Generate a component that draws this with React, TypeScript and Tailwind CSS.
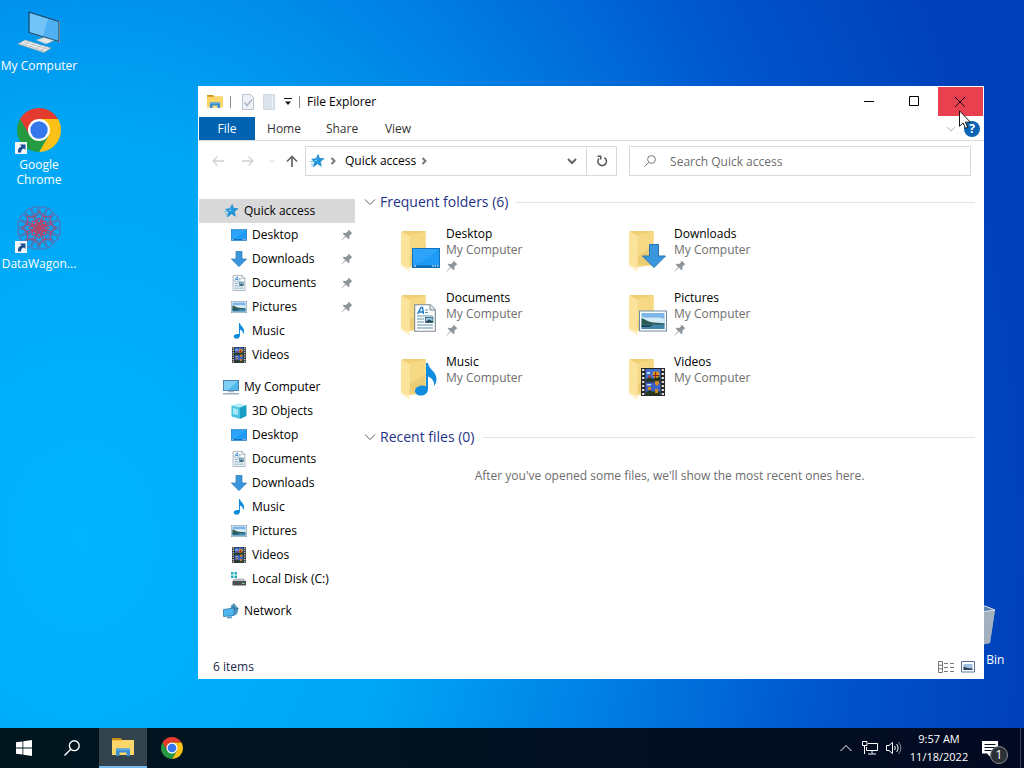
import { useState } from "react";
import type { ComponentType, ReactNode, SVGProps } from "react";

type IconProps = SVGProps<SVGSVGElement>;
type Icon = ComponentType<IconProps>;

/* ---------- Folder and file icons ---------- */

const StarIcon = (props: IconProps) => (
  <svg viewBox="0 0 16 16" {...props}>
    <path d="M9.200 1.500l1.300 4 4.500.1-3.600 2.900.9 4.700-3.700-2.500L4.500 13.800l1.100-4.600L2.800 6.200l4.200-.5z" fill="#2196dc" stroke="#1b84c9" strokeWidth=".7" />
    <path d="M1.500 8.500h3M2 10.800h2.500M2.500 12.900h2" stroke="#5bb8ea" strokeWidth=".9" />
    <path d="M9 3.500L7.800 6.700l-3 .3 3 1.500z" fill="#7fcdf8" />
  </svg>
);

const DesktopIcon = (props: IconProps) => (
  <svg viewBox="0 0 28 28" {...props}>
    <rect x=".5" y="4.500" width="27" height="19" fill="#1e9bf7" stroke="#1272bd" />
    <path d="M1 5h26L9 19H1z" fill="#38a8fb" opacity=".6" />
    <path d="M1 21.500h26V23H1z" fill="#0d66ae" />
    <path d="M2 22h2M20 22h1.500M22.500 22H24M25 22h1.500" stroke="#fff" strokeWidth="1.200" />
  </svg>
);

const DownloadIcon = (props: IconProps) => (
  <svg viewBox="0 0 24 24" {...props}>
    <path d="M7.500.5h9V12h7L12 23.500.5 12h7z" fill="#3a96dd" stroke="#2675b5" />
  </svg>
);

const DocumentIcon = (props: IconProps) => (
  <svg viewBox="0 0 22 28" {...props}>
    <path d="M.7.7h15.600l5 5v21.600H.7z" fill="#fff" stroke="#7b8791" strokeWidth="1.100" />
    <path d="M16 .7v5.300h5.300" fill="#e5eaee" stroke="#7b8791" />
    <path d="M3.500 10l3.500-6.500h1.500L9.500 10M5 8h4" fill="none" stroke="#1979ca" strokeWidth="1.400" />
    <path d="M11 6h3M11 8.500h3M3 12h16M3 15h7M3 18h7M3 21h16M3 24h16" stroke="#5a92ad" strokeWidth="1.100" />
    <rect x="11.500" y="13.500" width="7.500" height="5" fill="#8fc3de" stroke="#355f78" strokeWidth=".8" />
    <path d="M12 17.500l3-2 4 2v1h-7z" fill="#27475a" />
  </svg>
);

const PictureIcon = (props: IconProps) => (
  <svg viewBox="0 0 28 28" {...props}>
    <rect x=".5" y="4" width="27" height="20" fill="#fff" stroke="#6f8ca3" />
    <rect x="2.500" y="6" width="23" height="16" fill="#7db7ea" />
    <path d="M2.500 10c7 2 14-1 23 2v4h-23z" fill="#d6ebf8" />
    <path d="M2.500 11.500c3 0 5 2.500 9 3.500s9 .5 14 1.500v1.500h-23z" fill="#2c5d50" />
    <path d="M2.500 17.500h23V22h-23z" fill="#4285ad" />
    <path d="M2.500 18h12l-4 2h-8z" fill="#214c58" />
  </svg>
);

const MusicIcon = (props: IconProps) => (
  <svg viewBox="0 0 22 33" {...props}>
    <path
      d="M11 0h2c.4 6 8.500 8.500 8.500 16 0 3-1 5-2.500 7 .6-5-2-8-6-9.500V26c0 4-3 6.500-7 6.500-3.500 0-6-1.800-6-4.500 0-3.200 3.500-5.500 7.500-5.500 1.300 0 2.500.2 3.500.7z"
      fill="#0f8ce0"
    />
  </svg>
);

const VideoIcon = (props: IconProps) => (
  <svg viewBox="0 0 24 28" {...props}>
    <rect width="24" height="28" fill="#262626" />
    <path d="M2.200 1v27M21.800 1v27" stroke="#e8e8e8" strokeWidth="2.200" strokeDasharray="2 2" />
    <rect x="4.500" y="1" width="15" height="12.500" fill="#3f6fd1" />
    <rect x="4.500" y="14.500" width="15" height="12.500" fill="#3c63c4" />
    <path d="M5 11l4-2 3 2 3-3 4 1v4.500H5zM5 24l4-2 3 2 3-2 4 2v3H5z" fill="#26391f" />
    <path d="M12.500 3.500h5l1 3.500-2 3h-3l-2-3z" fill="#e39a1b" />
    <path d="M14 4h1.200v6H14zM12 7h6v1h-6z" fill="#8b2315" />
    <path d="M14 13h4v3l-2 2-2-2zM7 19h3v3H7zM14 21h3v4h-3z" fill="#d18a22" />
    <path d="M6 4h3v2H6zM6 16h4v1.500H6z" fill="#c7d8f7" />
    <path d="M7 8l2-1 1 2-2 1z" fill="#c4342a" />
  </svg>
);

const ComputerIcon = (props: IconProps) => (
  <svg viewBox="0 0 16 16" {...props}>
    <rect x=".5" y="1.500" width="15" height="10" fill="#4db8ec" stroke="#3d7ea8" strokeWidth=".9" />
    <path d="M1 2h14L5 11H1z" fill="#8cd6f7" opacity=".8" />
    <path d="M5 11.800h6v1.500H5z" fill="#a9b4bb" />
    <path d="M0 14.800h16" stroke="#7f919c" strokeWidth="1.100" />
  </svg>
);

const CubeIcon = (props: IconProps) => (
  <svg viewBox="0 0 16 16" {...props}>
    <path d="M.5 2.500L7 .5l8.500 1.500L9 4.500z" fill="#b5eef8" />
    <path d="M.5 2.500L9 4.500V16L.5 13.500z" fill="#4cc3e0" />
    <path d="M9 4.500L15.500 2v11L9 16z" fill="#1b9cc4" />
    <path d="M2 5l5 1.300v6L2 11z" fill="#a5e9f6" />
  </svg>
);

const DiskIcon = (props: IconProps) => (
  <svg viewBox="0 0 16 16" {...props}>
    <path d="M0 1h2.500v2.500H0zM3.500 1H6v2.500H3.500zM0 4.500h2.500V7H0zM3.500 4.500H6V7H3.500z" fill="#22b0b8" />
    <path d="M3 7.500h10l2 2.500H1.500z" fill="#b9bdc0" />
    <path d="M1.500 10H15v4.500H1.500z" fill="#4b5054" />
    <path d="M11 12.500h2.500" stroke="#7ce08a" />
  </svg>
);

const NetworkIcon = (props: IconProps) => (
  <svg viewBox="0 0 16 16" {...props}>
    <path d="M8 2.500L11 .5l4.500 5-1.500 6-4 1z" fill="#5a9cc6" />
    <path d="M11 .5v12M7 5l8.500.5M8 2.500l7 6" stroke="#2c6f9c" strokeWidth=".7" fill="none" />
    <path d="M.5 6.500L11 5v7.500l-10.500 1z" fill="#4eb6ee" stroke="#2d79a8" strokeWidth=".8" />
    <path d="M4 13.700l4.500-.5.500 2H4z" fill="#4b93bf" />
  </svg>
);

const PinIcon = (props: IconProps) => (
  <svg viewBox="0 0 12 12" {...props}>
    <path d="M7.500 0.500l4 4-1.200.3-2 2.200.1 2.500-1 .7-2.600-2.600L.8 11.500l-.3-.3 3.600-4.100L1.800 4.700l.7-1 2.600.2L7.200 1.900z" fill="#8f969b" />
  </svg>
);

const ExplorerIcon = (props: IconProps) => (
  <svg viewBox="0 0 22 18" {...props}>
    <path d="M0 0h8l2 2h12v15H0z" fill="#f5c242" />
    <path d="M0 0h8l2 2H0z" fill="#c98f1b" />
    <path d="M0 3h9l2-1h11v15H0z" fill="#fbd66b" />
    <path d="M4 18v-7.500h14V18h-3.500v-3.500h-7V18z" fill="#3b8bd0" />
    <path d="M4 10.500h14v2H4z" fill="#5aa9e6" />
  </svg>
);

const ChromeIcon = (props: IconProps) => (
  <svg viewBox="0 0 44 44" {...props}>
    <path d="M22 11h19.050A22 22 0 0 0 2.950 11l9.520 16.500z" fill="#e33b2e" />
    <path d="M22 11h19.050A22 22 0 0 1 22 44l9.530-16.500z" fill="#fbc116" />
    <path d="M12.470 27.500L2.950 11A22 22 0 0 0 22 44l9.530-16.500z" fill="#249a41" />
    <circle cx="22" cy="22" r="11" fill="#fff" />
    <circle cx="22" cy="22" r="8.700" fill="#3577ec" />
  </svg>
);

const FolderIcon = ({ children, ...props }: IconProps & { children: ReactNode }) => (
  <svg viewBox="0 0 44 48" {...props}>
    <path d="M2 5h23.500v34L9 41z" fill="#f0cf74" />
    <path d="M9 9l16.500-3v33L9 41z" fill="#f5d985" />
    <path d="M10 39h15.500V20L10 30z" fill="#e6c36a" opacity=".6" />
    <path d="M1 5.500l8.500 4.500v35L7 44 1 39z" fill="#fbe39c" />
    <path d="M1 39l6 5 2.500 1.500V42z" fill="#fff3cf" />
    {children}
  </svg>
);

/* ---------- Desktop icons ---------- */

const ShortcutBadge = () => (
  <g>
    <rect x="0" y="35" width="12" height="12" fill="#f2f5f8" />
    <path d="M3 45.500c-.5-3.500 1-5.500 3.500-6L5 37.500h5.500V43L9 41.500c-2 .5-3 1.500-3 4z" fill="#1f4f91" />
  </g>
);

const BigComputer = () => (
  <svg viewBox="0 0 48 48" className="h-12 w-12">
    <path d="M14 4l31 9.500v21L14 25z" fill="#c6d4dc" />
    <path d="M14 4l30 9.500v20L14 24.500z" fill="#4fb0f2" stroke="#173b57" strokeWidth="1" />
    <path d="M15 5.500l18 5.500-5 17-13-4z" fill="#7ac8f9" opacity=".8" />
    <path d="M27 30l8 2v3l-7-1z" fill="#c1cbd1" />
    <path d="M21 32l8-2.500 10 3L31 36z" fill="#e1e6e9" stroke="#93a4ae" strokeWidth=".5" />
    <path d="M3 36l7-4 26 8-7 4.500z" fill="#f1f1ef" stroke="#93a4ae" strokeWidth=".7" />
    <path d="M6 35.500l25 8M9 34l25 7.500M8 37.500l6-4M14 39.500l6-4M20 41.500l6-4M25 43l6-4" stroke="#a9b2b6" strokeWidth=".7" />
  </svg>
);

const BigChrome = () => (
  <svg viewBox="0 0 48 48" className="h-12 w-12">
    <ChromeIcon x="2" y="1" width="44" height="44" />
    <ShortcutBadge />
  </svg>
);

const BigDataWagon = () => (
  <svg viewBox="0 0 48 48" className="h-12 w-12">
    <g fill="none" stroke="#5c6fae" strokeWidth="1.100">
      {[0, 45, 90, 135, 180, 225, 270, 315].map((angle) => (
        <g key={angle} transform={`rotate(${angle} 24 22)`}>
          <path d="M17 1h6v8h-6zM25 1h6v8h-6z" />
          <path d="M24 5l6 7-6 7-6-7z" stroke="#a04c74" />
          <path d="M24 12l4 6-4 3-4-3z" stroke="#c2405c" />
        </g>
      ))}
    </g>
    <ShortcutBadge />
  </svg>
);

const RecycleBin = () => (
  <svg viewBox="0 0 48 48" className="h-12 w-12">
    <path d="M8 8l28-4 10 4-5 33-23 5-6-5z" fill="#8499ad" />
    <path d="M8 8l10 4 28-4-5 33-23 5z" fill="#a2b1bd" />
    <path d="M8 8l28-4 10 4-28 4z" fill="#5b7fae" stroke="#dbe4ec" />
  </svg>
);

interface DesktopItemProps {
  label: string;
  icon: Icon;
}

const shortcuts: DesktopItemProps[] = [
  { label: "My Computer", icon: BigComputer },
  { label: "Google Chrome", icon: BigChrome },
  { label: "DataWagon...", icon: BigDataWagon },
];

const DesktopItem = ({ label, icon: ItemIcon }: DesktopItemProps) => (
  <button className="flex h-[99px] w-[78px] flex-col items-center gap-0.5 pt-2 text-xs leading-[15px] text-white">
    <ItemIcon />
    <span className="w-full text-center">{label}</span>
  </button>
);

/* ---------- Explorer data ---------- */

interface NavItem {
  label: string;
  icon: Icon;
  pinned?: boolean;
}

const navGroups: { root: NavItem; items: NavItem[] }[] = [
  {
    root: { label: "Quick access", icon: StarIcon },
    items: [
      { label: "Desktop", icon: DesktopIcon, pinned: true },
      { label: "Downloads", icon: DownloadIcon, pinned: true },
      { label: "Documents", icon: DocumentIcon, pinned: true },
      { label: "Pictures", icon: PictureIcon, pinned: true },
      { label: "Music", icon: MusicIcon },
      { label: "Videos", icon: VideoIcon },
    ],
  },
  {
    root: { label: "My Computer", icon: ComputerIcon },
    items: [
      { label: "3D Objects", icon: CubeIcon },
      { label: "Desktop", icon: DesktopIcon },
      { label: "Documents", icon: DocumentIcon },
      { label: "Downloads", icon: DownloadIcon },
      { label: "Music", icon: MusicIcon },
      { label: "Pictures", icon: PictureIcon },
      { label: "Videos", icon: VideoIcon },
      { label: "Local Disk (C:)", icon: DiskIcon },
    ],
  },
  { root: { label: "Network", icon: NetworkIcon }, items: [] },
];

const folders = [
  { name: "Desktop", pinned: true, overlay: <DesktopIcon x="12" y="18" width="28" height="28" /> },
  { name: "Downloads", pinned: true, overlay: <DownloadIcon x="14" y="18" width="24" height="24" /> },
  { name: "Documents", pinned: true, overlay: <DocumentIcon x="14" y="14" width="22" height="28" /> },
  { name: "Pictures", pinned: true, overlay: <PictureIcon x="11" y="17" width="28" height="28" /> },
  { name: "Music", pinned: false, overlay: <MusicIcon x="15" y="9" width="22" height="33" /> },
  { name: "Videos", pinned: false, overlay: <VideoIcon x="13" y="14" width="24" height="28" /> },
];

const Chevron = ({ className, d }: { className: string; d: string }) => (
  <svg viewBox="0 0 12 12" fill="none" stroke="currentColor" className={className}>
    <path d={d} />
  </svg>
);

const DOWN = "M1 3.500l5 5 5-5";
const RIGHT = "M4.500 3l3 3-3 3";

const SectionHeader = ({ title }: { title: string }) => (
  <div className="flex h-6 items-center px-[9px]">
    <button className="flex items-center gap-1 text-sm text-[#1e3287]">
      <Chevron d={DOWN} className="h-3 w-3 text-[#5c5c5c]" />
      {title}
    </button>
    <div className="ml-2 h-px flex-1 bg-[#e2e2e2]" />
  </div>
);

/* ---------- Explorer window ---------- */

const TitleBar = () => (
  <div className="flex h-[31px] items-start">
    <div className="flex h-full flex-1 items-center pl-[9px]">
      <ExplorerIcon className="h-[13px] w-4" />
      <div className="ml-[7px] h-3 w-px bg-[#8b8b8b]" />
      <button aria-label="Properties" className="ml-[11px]">
        <svg viewBox="0 0 12 16" className="h-4 w-3">
          <path d="M.5.5h8l3 3v12H.5z" fill="#eef2f7" stroke="#b9c4d3" />
          <path d="M2.500 8.500l2.500 3 5-6" fill="none" stroke="#a9b6ca" strokeWidth="1.500" />
        </svg>
      </button>
      <button aria-label="New folder" className="ml-[9px]">
        <svg viewBox="0 0 12 16" className="h-4 w-3">
          <path d="M.5.5h11v15H.5z" fill="#dbe2ea" stroke="#d0d9e3" />
          <path d="M9.500 1v14" stroke="#eef2f6" />
        </svg>
      </button>
      <button aria-label="Customize toolbar" className="ml-[9px]">
        <svg viewBox="0 0 8 8" className="h-2 w-2">
          <path d="M0 .5h8" stroke="#111" />
          <path d="M1 3.500h6l-3 3.500z" fill="#111" />
        </svg>
      </button>
      <div className="ml-[7px] h-3 w-px bg-[#8b8b8b]" />
      <h1 className="ml-[7px] text-xs text-black">File Explorer</h1>
    </div>
    <button aria-label="Minimize" className="flex h-[30px] w-[42px] items-center justify-center">
      <svg viewBox="0 0 10 10" className="h-2.5 w-2.5">
        <path d="M0 5.500h10" stroke="#000" />
      </svg>
    </button>
    <button aria-label="Maximize" className="flex h-[30px] w-12 items-center justify-center">
      <svg viewBox="0 0 10 10" className="h-2.5 w-2.5">
        <path d="M.5.5h9v9h-9z" stroke="#000" fill="none" />
      </svg>
    </button>
    <button aria-label="Close" className="mr-px mt-px flex h-[29px] w-[45px] items-center justify-center bg-[#e9404f] pr-px">
      <svg viewBox="0 0 10 10" className="h-2.5 w-2.5">
        <path d="M0 0l10 10M10 0L0 10" stroke="#231015" />
      </svg>
    </button>
  </div>
);

const Ribbon = () => (
  <div className="flex h-6 items-stretch border-b border-[#dadbdc] text-xs text-[#333]">
    <button className="ml-px w-14 bg-[#0063b1] text-white">File</button>
    <button className="w-[58px]">Home</button>
    <button className="w-[58px]">Share</button>
    <button className="w-[54px]">View</button>
    <div className="ml-auto flex items-center gap-2 pr-1">
      <button aria-label="Expand ribbon">
        <Chevron d={DOWN} className="h-2.5 w-2.5 text-[#a5a5a5]" />
      </button>
      <button aria-label="Help" className="h-4 w-4 rounded-full bg-[#0c64b4] text-xs font-bold leading-4 text-white">
        ?
      </button>
    </div>
  </div>
);

const AddressBar = () => (
  <div className="flex h-[42px] items-start pr-[13px] pt-[5px] text-xs">
    <div className="flex h-[30px] w-[107px] items-center pl-[14px]">
      <button aria-label="Back">
        <svg viewBox="0 0 12 12" fill="none" stroke="#d0d0d0" strokeWidth="1.300" className="h-3 w-3">
          <path d="M12 6H1M5.500 1.500L1 6l4.500 4.500" />
        </svg>
      </button>
      <button aria-label="Forward" className="ml-[18px]">
        <svg viewBox="0 0 12 12" fill="none" stroke="#d0d0d0" strokeWidth="1.300" className="h-3 w-3">
          <path d="M0 6h11M6.500 1.500L11 6l-4.500 4.500" />
        </svg>
      </button>
      <button aria-label="Recent locations" className="ml-3.5">
        <Chevron d="M3 5l3 2.500L9 5" className="h-2 w-2 text-[#b5b5b5]" />
      </button>
      <button aria-label="Up" className="ml-2.5">
        <svg viewBox="0 0 12 12" fill="none" stroke="#666" strokeWidth="1.700" className="h-3 w-3">
          <path d="M6 12V1.500M1 6.500l5-5 5 5" />
        </svg>
      </button>
    </div>
    <div className="flex h-[30px] min-w-0 flex-[312] items-center border border-[#d9d9d9]">
      <StarIcon className="ml-[3px] h-4 w-4" />
      <Chevron d={RIGHT} className="ml-0.5 h-3 w-3 stroke-2 text-[#777]" />
      <button className="ml-1.5 text-black">Quick access</button>
      <Chevron d={RIGHT} className="ml-0.5 h-3 w-3 stroke-2 text-[#777]" />
      <button aria-label="Previous locations" className="ml-auto px-2">
        <Chevron d="M2 4l4 4 4-4" className="h-3 w-3 stroke-2 text-[#666]" />
      </button>
      <button aria-label="Refresh" className="flex h-full w-[30px] items-center justify-center border-l border-[#d9d9d9]">
        <svg viewBox="0 0 12 12" fill="none" stroke="#555" strokeWidth="1.500" className="h-3 w-3">
          <path d="M8.300 2.600A4.300 4.300 0 1 1 3 3.400" />
          <path d="M1.500 1.300h3.200v3.200" />
        </svg>
      </button>
    </div>
    <div className="ml-3 flex h-[30px] min-w-0 flex-[342] items-center border border-[#d9d9d9]">
      <svg viewBox="0 0 12 12" fill="none" stroke="#777" className="ml-[14px] h-3 w-3 shrink-0">
        <circle cx="7.500" cy="4.500" r="3.900" />
        <path d="M4.800 7.300L.5 11.500" />
      </svg>
      <input
        type="search"
        aria-label="Search Quick access"
        placeholder="Search Quick access"
        className="ml-3.5 h-full min-w-0 flex-1 bg-transparent outline-none placeholder:text-[#6d6d6d]"
      />
    </div>
  </div>
);

const Sidebar = () => {
  const [selected, setSelected] = useState("0-root");

  return (
    <nav className="w-[157px] shrink-0 pl-px pt-4 text-xs text-black">
      {navGroups.map((group, index) => {
        const rootId = `${index}-root`;
        const RootIcon = group.root.icon;
        return (
          <ul key={rootId} className="mb-2">
            <li>
              <button
                onClick={() => setSelected(rootId)}
                className={`flex h-6 w-full items-center gap-[5px] pl-6 ${selected === rootId ? "bg-[#d9d9d9]" : ""}`}
              >
                <RootIcon className="h-4 w-4" />
                {group.root.label}
              </button>
            </li>
            {group.items.map((item) => {
              const id = `${index}-${item.label}`;
              return (
                <li key={id}>
                  <button
                    onClick={() => setSelected(id)}
                    className={`flex h-6 w-full items-center gap-[5px] pl-8 ${selected === id ? "bg-[#d9d9d9]" : ""}`}
                  >
                    <item.icon className="h-4 w-4" />
                    {item.label}
                    {item.pinned && <PinIcon className="ml-auto mr-0.5 h-3 w-3" />}
                  </button>
                </li>
              );
            })}
          </ul>
        );
      })}
    </nav>
  );
};

const ExplorerWindow = () => (
  <section className="absolute bottom-[49px] left-[198px] right-10 top-[86px] flex flex-col overflow-hidden bg-white">
    <TitleBar />
    <Ribbon />
    <AddressBar />
    <div className="flex min-h-0 flex-1">
      <Sidebar />
      <main className="min-w-0 flex-1 pt-[7px]">
        <SectionHeader title="Frequent folders (6)" />
        <div className="mt-3 grid grid-cols-[repeat(auto-fill,228px)] pl-[45px] pr-2">
          {folders.map((folder) => (
            <button key={folder.name} className="flex h-16 items-start gap-0.5 text-left text-xs leading-4">
              <FolderIcon className="h-12 w-11">{folder.overlay}</FolderIcon>
              <span className="flex flex-col">
                <span className="text-black">{folder.name}</span>
                <span className="text-[#6d6d6d]">My Computer</span>
                {folder.pinned && <PinIcon className="mt-0.5 h-3 w-3" />}
              </span>
            </button>
          ))}
        </div>
        <div className="mt-[7px]">
          <SectionHeader title="Recent files (0)" />
        </div>
        <p className="mt-[19px] text-center text-xs leading-4 text-[#6d6d6d]">
          After you've opened some files, we'll show the most recent ones here.
        </p>
      </main>
    </div>
    <footer className="flex h-6 items-center pl-[15px] pr-[9px] text-xs text-[#1e2a4a]">
      <span>6 items</span>
      <button aria-label="Details view" className="ml-auto">
        <svg viewBox="0 0 16 12" className="h-3 w-4" fill="none" stroke="#777">
          <path d="M.5.5h4v11h-4zM.5 4.200h4M.5 7.800h4" />
          <path d="M6 2.500h4M12 2.500h4M6 6.500h4M12 6.500h4M6 10.500h4M12 10.500h4" />
        </svg>
      </button>
      <button aria-label="Large icons view" className="ml-[7px]">
        <svg viewBox="0 0 14 12" className="h-3 w-3.5">
          <path d="M.5.5h13v10.500H.5z" fill="#fff" stroke="#5b7396" />
          <path d="M2.500 3h9v6h-9z" fill="#9cc1e2" />
          <path d="M2.500 5.500l4 1.500 5 .5V9h-9z" fill="#26425c" />
        </svg>
      </button>
    </footer>
  </section>
);

/* ---------- Taskbar ---------- */

const Taskbar = () => (
  <footer className="flex h-10 items-stretch bg-linear-to-r from-[#00161f] to-[#020a22] text-xs text-white">
    <button aria-label="Start" className="flex w-12 items-center justify-center">
      <svg viewBox="0 0 16 16" className="h-4 w-4" fill="#fff">
        <path d="M0 2.300l6.500-.9v6.200H0zM7.300 1.300L16 0v7.600H7.300zM0 8.400h6.500v6.200L0 13.700zM7.300 8.400H16V16l-8.700-1.300z" />
      </svg>
    </button>
    <button aria-label="Search" className="flex w-12 items-center justify-center">
      <svg viewBox="0 0 16 16" className="h-4 w-4" fill="none" stroke="#fff" strokeWidth="1.400">
        <circle cx="10.300" cy="5.700" r="4.900" />
        <path d="M6.800 9.200L.5 15.500" />
      </svg>
    </button>
    <button
      aria-label="File Explorer"
      className="ml-[3px] flex w-12 items-center justify-center border-b-2 border-[#76b9ed] bg-[#33444f]"
    >
      <ExplorerIcon className="h-[18px] w-[22px]" />
    </button>
    <button aria-label="Google Chrome" className="ml-px flex w-12 items-center justify-center">
      <ChromeIcon className="h-[22px] w-[22px]" />
    </button>

    <div className="ml-auto flex items-center">
      <button aria-label="Show hidden icons">
        <Chevron d="M.5 9L6 3.500 11.500 9" className="h-3 w-3" />
      </button>
      <button aria-label="Network" className="ml-2.5">
        <svg viewBox="0 0 16 14" className="h-3.5 w-4" fill="none" stroke="#fff">
          <path d="M6 2.500h9.500v7H4.500V6" />
          <path d="M.5.5H5v4H.5zM2.500 4.500v8.500M10 9.500v3M6 13h8" />
        </svg>
      </button>
      <button aria-label="Volume" className="ml-2">
        <svg viewBox="0 0 16 14" className="h-3.5 w-4" fill="none" stroke="#fff">
          <path d="M.5 4.500H3L6.500 1.500v11L3 9.500H.5z" />
          <path d="M8.500 5c1 1.200 1 2.800 0 4M10.500 3c2 2.400 2 5.600 0 8" />
          <path d="M12.500 1c3 3.600 3 8.400 0 12" stroke="#8d939c" />
        </svg>
      </button>
      <div className="ml-1.5 w-[62px] text-center text-[11px] leading-[18px]">
        <div>9:57 AM</div>
        <div>11/18/2022</div>
      </div>
      <button aria-label="Notifications" className="relative ml-3 h-8 w-[26px]">
        <svg viewBox="0 0 16 16" className="mt-px h-4 w-4">
          <path d="M0 0h16v12.500H8.500V16L5 12.500H0z" fill="#fff" />
          <path d="M2.500 3.500h11M2.500 6.500h11M2.500 9.500h7" stroke="#06101f" />
        </svg>
        <span className="absolute bottom-0 right-0 h-[18px] w-[18px] rounded-full border border-[#8a8d92] bg-[#2b2f36] text-center text-xs leading-4">
          1
        </span>
      </button>
      <div className="ml-3 mr-[3px] h-10 w-px bg-[#39435a]" />
    </div>
  </footer>
);

const App = () => {
  return (
    <div className="flex h-screen flex-col overflow-hidden bg-[radial-gradient(ellipse_112%_190%_at_8%_70%,#00b4ff_0%,#00a6f6_28%,#0080e4_46%,#0054cc_66%,#003fb8_84%)] font-['Open_Sans','Noto_Sans',sans-serif]">
      <div className="relative min-h-0 flex-1">
        <div className="flex flex-col items-start">
          {shortcuts.map((shortcut) => (
            <DesktopItem key={shortcut.label} {...shortcut} />
          ))}
        </div>
        <div className="absolute bottom-[35px] right-3">
          <DesktopItem label="Recycle Bin" icon={RecycleBin} />
        </div>
        <ExplorerWindow />
        {/* Mouse pointer resting on the close button */}
        <svg viewBox="0 0 12 19" className="absolute right-[53px] top-[110px] h-[19px] w-3">
          <path d="M.5.800v15.500l3.600-3.400 2.400 5.400 2.300-1-2.400-5.200h4.900z" fill="#fff" stroke="#000" strokeWidth=".9" />
        </svg>
      </div>
      <Taskbar />
    </div>
  );
};

export default App;
